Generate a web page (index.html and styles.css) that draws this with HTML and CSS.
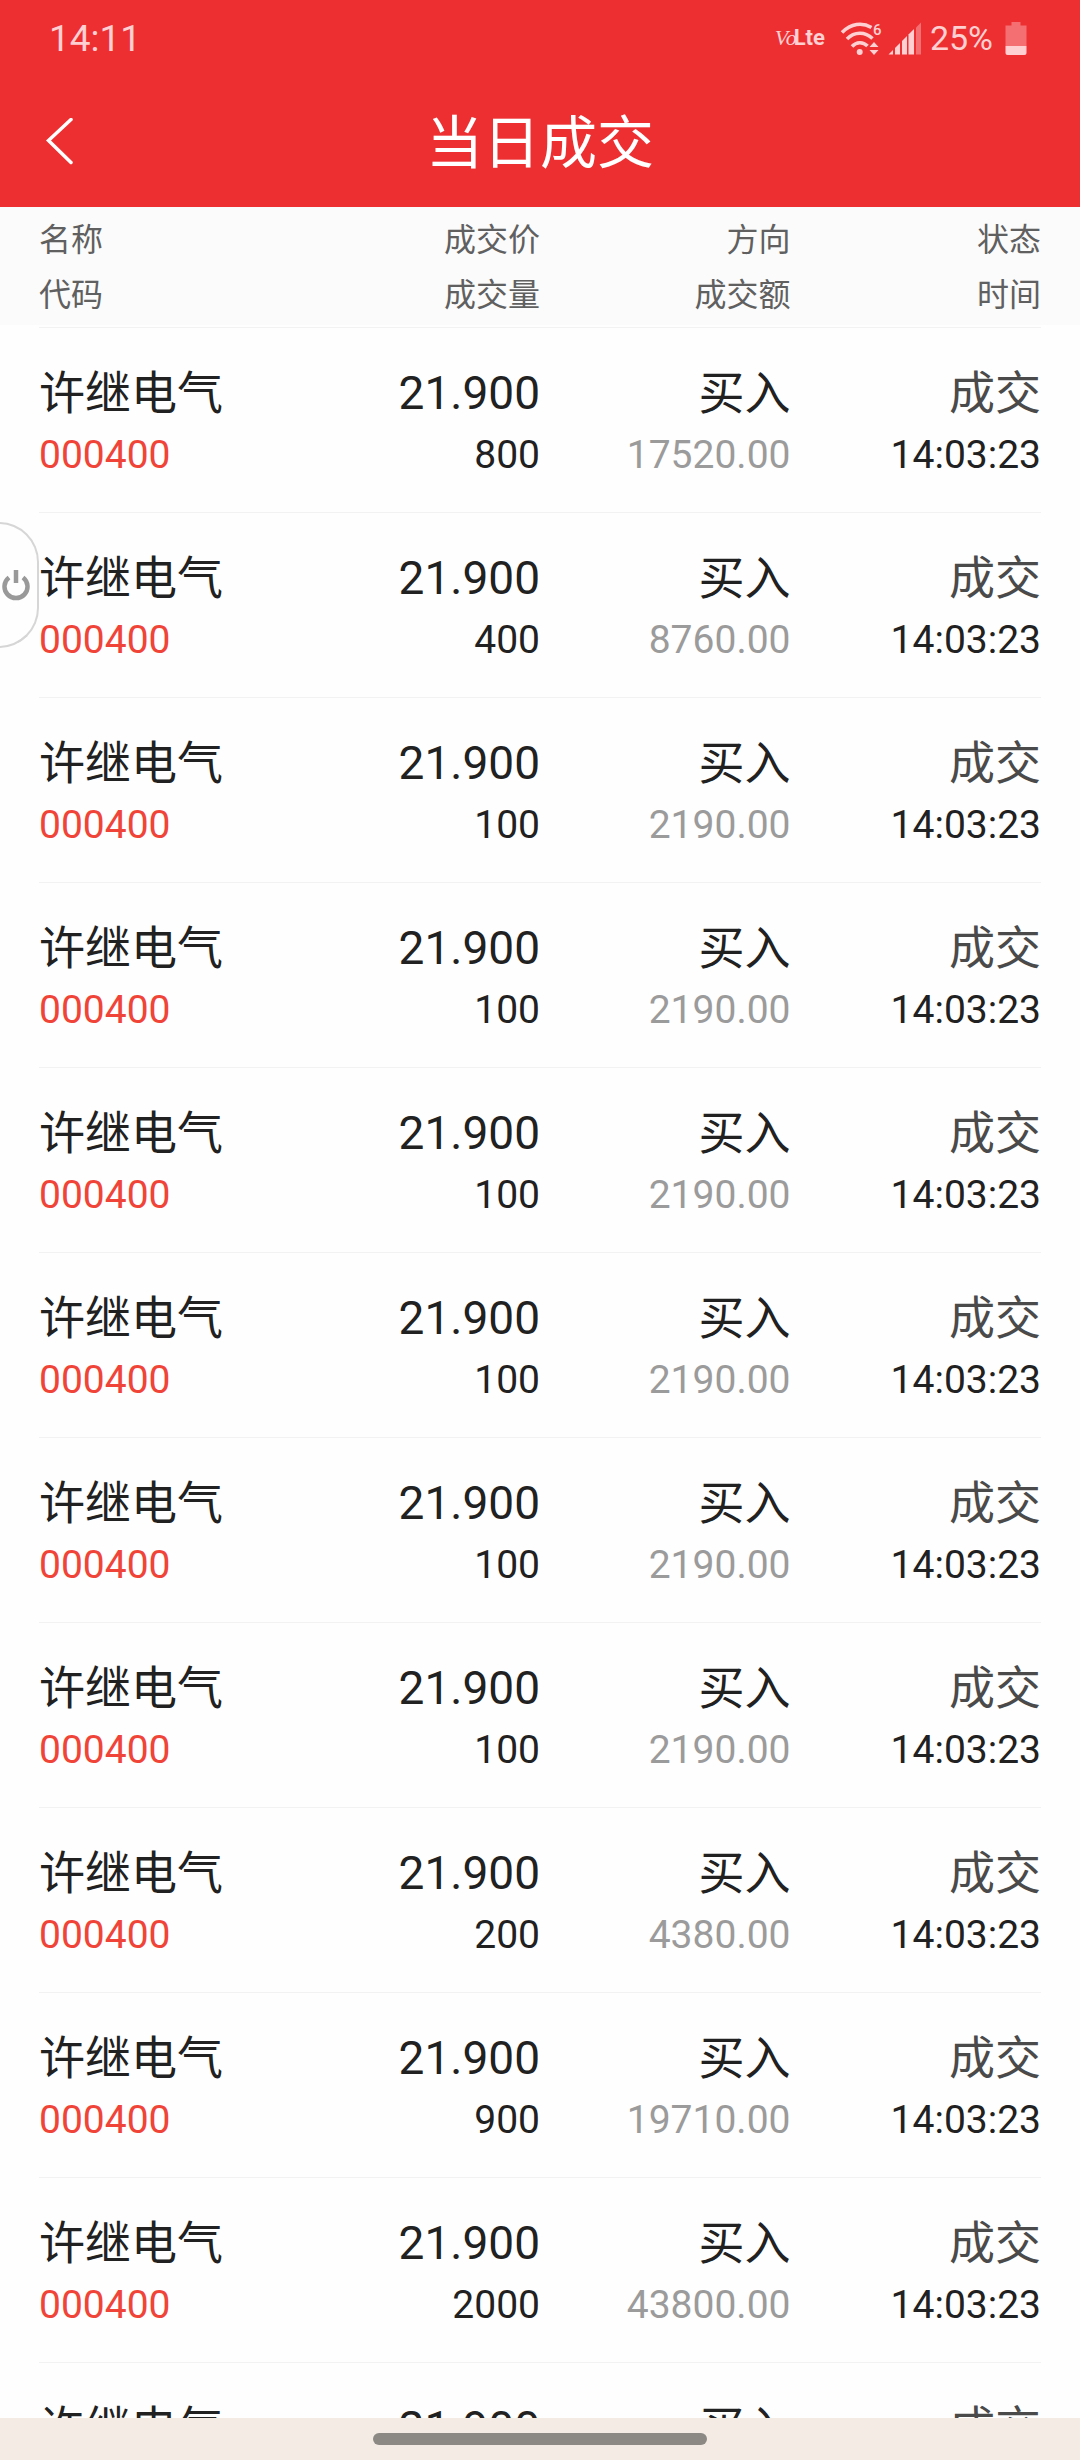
FILE: index.html
```html
<!DOCTYPE html>
<html lang="zh-CN">
<head>
  <meta charset="UTF-8">
  <meta name="viewport" content="width=device-width, initial-scale=1">
  <title>当日成交</title>
  <link rel="stylesheet" href="styles.css">
</head>
<body>

<div class="status-bar">
  <span class="clock">14:11</span>
  <div class="status-icons">
    <span class="volte"><i>Vo</i><b>Lte</b></span>
    <svg class="wifi" width="42" height="34" viewBox="0 0 42 34">
      <g fill="none" stroke="currentColor" stroke-width="3.6">
        <path d="M2 11.500C11 2.500 22 1 31.500 6.500"/>
        <path d="M7 18C14.500 10.500 25 10.500 32.500 17.500"/>
        <path d="M12 25.500C16.500 20.500 23 20.500 27.500 25"/>
      </g>
      <circle cx="19.700" cy="31" r="3" fill="currentColor"/>
      <path fill="currentColor" d="M34 21l4.500 5h-9zM34 34l4.500-5h-9z"/>
      <text x="33" y="14" fill="currentColor" font-size="15" font-weight="500">6</text>
    </svg>
    <svg class="signal" width="34" height="34" viewBox="0 0 34 34">
      <g fill="currentColor">
        <path d="M0.500 33.500L5 29V33.500z"/>
        <path d="M7 33.500V27L12 22V33.500z"/>
        <path d="M14 33.500V20L19 15V33.500z"/>
        <path d="M20.500 33.500V13.500L26 8V33.500z"/>
        <path opacity=".4" d="M28 33.500V6.500L33 1.500V33.500z"/>
      </g>
    </svg>
    <span class="percent">25%</span>
    <svg class="battery" width="22" height="34" viewBox="0 0 22 34">
      <path fill="currentColor" opacity=".4" d="M0.500 4.500h6V1h9v3.500h6V25h-21z"/>
      <path fill="currentColor" d="M0.500 25h21v7q0 2-2 2h-17q-2 0-2-2z"/>
    </svg>
  </div>
</div>

<header class="title-bar">
  <button class="back" aria-label="返回">
    <svg width="28" height="48" viewBox="0 0 28 48">
      <path d="M25 1.500L2.500 22.500L25 44.500" fill="none" stroke="#fff" stroke-width="3.500" stroke-linecap="round"/>
    </svg>
  </button>
  <h1>当日成交</h1>
</header>

<main>
  <table>
    <thead>
      <tr>
        <th>名称<br>代码</th>
        <th>成交价<br>成交量</th>
        <th>方向<br>成交额</th>
        <th>状态<br>时间</th>
      </tr>
    </thead>
    <tbody id="deals"></tbody>
  </table>
</main>

<button class="power" aria-label="退出">
  <svg width="28" height="32" viewBox="0 0 28 32">
    <path d="M7 8.500A11.500 11.500 0 1 0 21 8.500" fill="none" stroke="#999" stroke-width="4.500"/>
    <path d="M14 1V14" stroke="#999" stroke-width="4.500"/>
  </svg>
</button>

<footer class="nav-bar"><div class="handle"></div></footer>

<script>
  // 成交量, 成交额
  const deals = [
    [800, "17520.00"],
    [400, "8760.00"],
    [100, "2190.00"],
    [100, "2190.00"],
    [100, "2190.00"],
    [100, "2190.00"],
    [100, "2190.00"],
    [100, "2190.00"],
    [200, "4380.00"],
    [900, "19710.00"],
    [2000, "43800.00"],
    [100, "2190.00"]
  ];

  let rows = "";
  for (const [volume, amount] of deals) {
    rows += `<tr>
      <td><div class="main">许继电气</div><div class="sub code">000400</div></td>
      <td><div class="main">21.900</div><div class="sub">${volume}</div></td>
      <td><div class="main">买入</div><div class="sub amount">${amount}</div></td>
      <td><div class="main state">成交</div><div class="sub">14:03:23</div></td>
    </tr>`;
  }
  document.getElementById("deals").innerHTML = rows;
</script>

</body>
</html>
```
FILE: styles.css
```css
* {
  box-sizing: border-box;
}

body {
  margin: 0;
  height: 100vh;
  display: flex;
  flex-direction: column;
  position: relative;
  overflow: hidden;
  background-color: #fefefe;
  color: #212121;
  font-family: Roboto, "Noto Sans CJK SC", sans-serif;
}

button {
  padding: 0;
  border: none;
  background: none;
  cursor: pointer;
}

svg {
  display: block;
}

.status-bar {
  flex: none;
  height: 76px;
  padding: 0 53px 0 49px;
  display: flex;
  justify-content: space-between;
  align-items: center;
  background-color: #ed2f32;
  color: #ffd0d2;
}

.clock {
  font-size: 37px;
}

.status-icons {
  display: flex;
  align-items: center;
}

.volte {
  display: flex;
  align-items: baseline;
  margin-right: 15px;
  font-size: 22px;
}

.volte i {
  font-family: "Liberation Serif", serif;
  margin-right: -3px;
}

.wifi {
  margin-right: 6px;
}

.signal {
  margin-right: 8px;
}

.percent {
  font-size: 34px;
  margin-right: 12px;
}

.title-bar {
  flex: none;
  height: 131px;
  padding: 0 46px;
  display: grid;
  grid-template-columns: 28px 1fr 28px;
  align-items: center;
  background-color: #ed2f32;
  color: #fff;
}

h1 {
  margin: 0;
  padding-top: 4px;
  font-size: 57px;
  font-weight: normal;
  line-height: 80px;
  text-align: center;
}

main {
  flex: 1;
  min-height: 0;
  overflow: hidden;
  padding: 0 39px;
}

table {
  width: 100%;
  table-layout: fixed;
  border-spacing: 0;
}

th {
  padding: 6px 0 2px;
  background-color: #fbfbfb;
  color: #606060;
  font-size: 32px;
  font-weight: normal;
  line-height: 55px;
  text-align: right;
}

/* carry the header colour out to the screen edges */
th:first-child {
  box-shadow: -39px 0 #fbfbfb;
}

th:last-child {
  box-shadow: 39px 0 #fbfbfb;
}

tbody::before {
  content: "";
  display: block;
  height: 2px;
}

td {
  padding: 34px 0 26px;
  border-top: 1px solid #f2f2f2;
  text-align: right;
}

th:first-child,
td:first-child {
  text-align: left;
}

.main {
  font-size: 46px;
  line-height: 62px;
}

.sub {
  font-size: 39px;
  line-height: 62px;
}

.code {
  color: #f04438;
}

.amount {
  color: #9b9b9b;
}

.state {
  color: #4a4a4a;
}

/* floating button docked to the left edge */
.power {
  position: absolute;
  left: -2px;
  top: 522px;
  width: 41px;
  height: 126px;
  padding-left: 2px;
  border: 2px solid #d6d6d6;
  border-radius: 0 40px 40px 0;
  background-color: #fefefe;
}

.nav-bar {
  flex: none;
  height: 42px;
  display: flex;
  justify-content: center;
  align-items: center;
  background-color: #f3ebe4;
}

.handle {
  width: 31%;
  height: 12px;
  border-radius: 6px;
  background-color: #8c8984;
}
```
